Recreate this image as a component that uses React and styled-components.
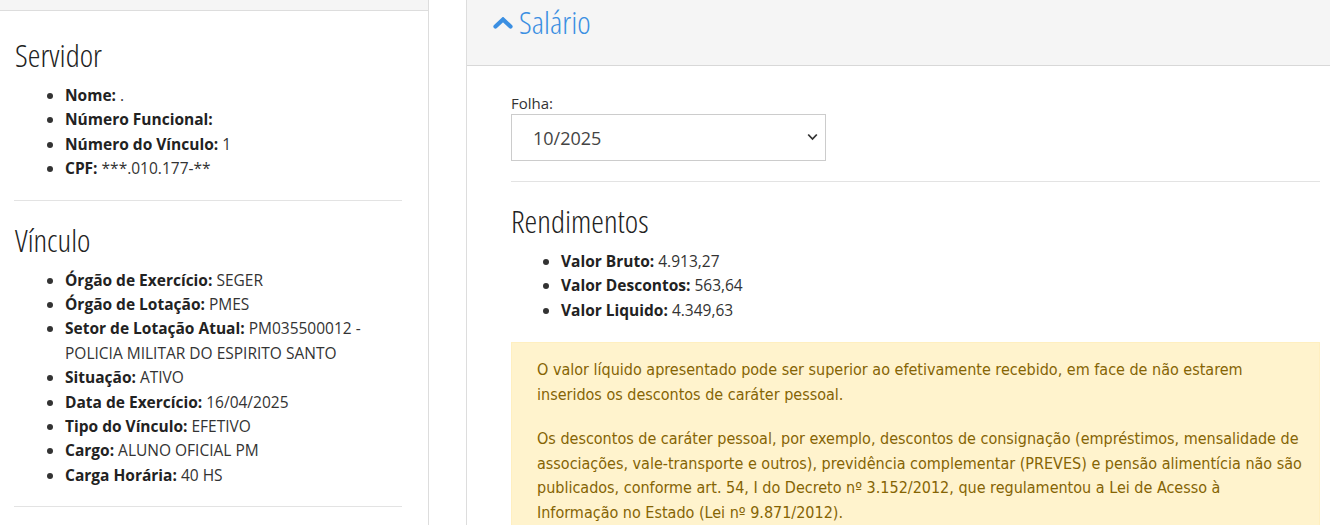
import React from "react";
import styled, { createGlobalStyle } from "styled-components";

const Global = createGlobalStyle`
  html, body { margin: 0; padding: 0; background: #fff; }
  body { font-family: "Open Sans", "Noto Sans", sans-serif; font-size: 15.5px; color: #333; }
  * { box-sizing: border-box; }
`;

const headingFont = `"Open Sans", "DejaVu Sans Condensed", sans-serif`;

const Page = styled.div`
  display: flex;
  align-items: stretch;
  min-height: 525px;
  overflow: hidden;
`;

const LeftPanel = styled.aside`
  width: 429px;
  flex: 0 0 429px;
  border-right: 1px solid #ddd;
  display: flex;
  flex-direction: column;
`;

const LeftTop = styled.div`
  height: 11px;
  background: #f5f5f5;
  border-bottom: 1px solid #ddd;
`;

const LeftBody = styled.div`
  padding: 5px 26px 0 14px;
`;

const Heading = styled.h3`
  font-family: ${headingFont};
  font-stretch: 75%;
  font-weight: 300;
  font-size: 32px;
  line-height: 33px;
  color: #222;
  margin: 22px 0 0 1px;
`;

const List = styled.ul`
  margin: 12px 0 19px;
  padding-left: ${(p) => p.$indent || 51}px;
  line-height: 24.4px;
`;

const Item = styled.li`
  b { font-weight: 700; color: #222; }
`;

const Rule = styled.hr`
  border: 0;
  border-top: 1px solid #e3e3e3;
  margin: 0;
`;

const Gap = styled.div`
  width: 37px;
  flex: 0 0 37px;
`;

const RightPanel = styled.section`
  flex: 1;
  border-left: 1px solid #ddd;
  display: flex;
  flex-direction: column;
`;

const RightHeader = styled.div`
  height: 66px;
  background: #f5f5f5;
  border-bottom: 1px solid #d8d8d8;
  padding: 5px 0 0 26px;
  display: flex;
  align-items: flex-start;
  gap: 6px;
`;

const Title = styled.h2`
  font-family: ${headingFont};
  font-stretch: 75%;
  font-weight: 300;
  font-size: 32px;
  line-height: 33px;
  color: #3b8fe2;
  margin: 0;
`;

const ChevronIcon = styled.svg`
  width: 20px;
  height: 12px;
  margin-top: 12px;
  flex: 0 0 auto;
`;

const RightBody = styled.div`
  padding: 26px 10px 0 44px;
`;

const Label = styled.label`
  display: block;
  line-height: 22px;
  font-size: 15px;
  color: #333;
`;

const SelectWrap = styled.div`
  position: relative;
  width: 315px;
  height: 47px;
  margin-bottom: 20px;
`;

const Select = styled.select`
  appearance: none;
  -webkit-appearance: none;
  width: 100%;
  height: 100%;
  border: 1px solid #ccc;
  border-radius: 0;
  background: #fff;
  padding: 0 0 0 21px;
  font-family: "Open Sans", "Noto Sans", sans-serif;
  font-size: 18px;
  color: #444;
`;

const SelectArrow = styled.svg`
  position: absolute;
  right: 8px;
  top: 19px;
  width: 11px;
  height: 8px;
  pointer-events: none;
`;

const SubHeading = styled(Heading)`
  margin: 22px 0 0;
`;

const Alert = styled.div`
  margin-top: 20px;
  background: #fff3cd;
  border: 1px solid #ffefc0;
  color: #856404;
  padding: 15px 15px 20px 25px;
  font-family: "DejaVu Sans Condensed", sans-serif;
  font-size: 16px;
  line-height: 24.5px;
  p { margin: 0 0 20px; }
  p:last-child { margin-bottom: 0; }
`;

const servidor = [
  ["Nome:", "."],
  ["Número Funcional:", ""],
  ["Número do Vínculo:", "1"],
  ["CPF:", "***.010.177-**"],
];

const vinculo = [
  ["Órgão de Exercício:", "SEGER"],
  ["Órgão de Lotação:", "PMES"],
  ["Setor de Lotação Atual:", "PM035500012 - POLICIA MILITAR DO ESPIRITO SANTO"],
  ["Situação:", "ATIVO"],
  ["Data de Exercício:", "16/04/2025"],
  ["Tipo do Vínculo:", "EFETIVO"],
  ["Cargo:", "ALUNO OFICIAL PM"],
  ["Carga Horária:", "40 HS"],
];

const rendimentos = [
  ["Valor Bruto:", "4.913,27"],
  ["Valor Descontos:", "563,64"],
  ["Valor Liquido:", "4.349,63"],
];

const Rows = ({ data }) =>
  data.map(([k, v]) => (
    <Item key={k}>
      <b>{k}</b> {v}
    </Item>
  ));

export default function App() {
  return (
    <>
      <Global />
      <Page>
        <LeftPanel>
          <LeftTop />
          <LeftBody>
            <Heading>Servidor</Heading>
            <List>
              <Rows data={servidor} />
            </List>
            <Rule />
            <Heading>Vínculo</Heading>
            <List>
              <Rows data={vinculo} />
            </List>
            <Rule />
          </LeftBody>
        </LeftPanel>
        <Gap />
        <RightPanel>
          <RightHeader>
            <ChevronIcon viewBox="0 0 20 12">
              <path d="M2.5 9.5 L10 2.5 L17.5 9.5" fill="none" stroke="#3b8fe2" strokeWidth="4.2" strokeLinecap="round" strokeLinejoin="miter" />
            </ChevronIcon>
            <Title>Salário</Title>
          </RightHeader>
          <RightBody>
            <Label htmlFor="folha">Folha:</Label>
            <SelectWrap>
              <Select id="folha" defaultValue="10/2025">
                <option>10/2025</option>
              </Select>
              <SelectArrow viewBox="0 0 11 8">
                <path d="M1.2 1.5 L5.5 6 L9.8 1.5" fill="none" stroke="#333" strokeWidth="1.8" />
              </SelectArrow>
            </SelectWrap>
            <Rule />
            <SubHeading>Rendimentos</SubHeading>
            <List $indent={50}>
              <Rows data={rendimentos} />
            </List>
            <Alert>
              <p>
                O valor líquido apresentado pode ser superior ao efetivamente recebido, em face de não estarem
                inseridos os descontos de caráter pessoal.
              </p>
              <p>
                Os descontos de caráter pessoal, por exemplo, descontos de consignação (empréstimos, mensalidade de
                associações, vale-transporte e outros), previdência complementar (PREVES) e pensão alimentícia não são
                publicados, conforme art. 54, I do Decreto nº 3.152/2012, que regulamentou a Lei de Acesso à
                Informação no Estado (Lei nº 9.871/2012).
              </p>
            </Alert>
          </RightBody>
        </RightPanel>
      </Page>
    </>
  );
}
